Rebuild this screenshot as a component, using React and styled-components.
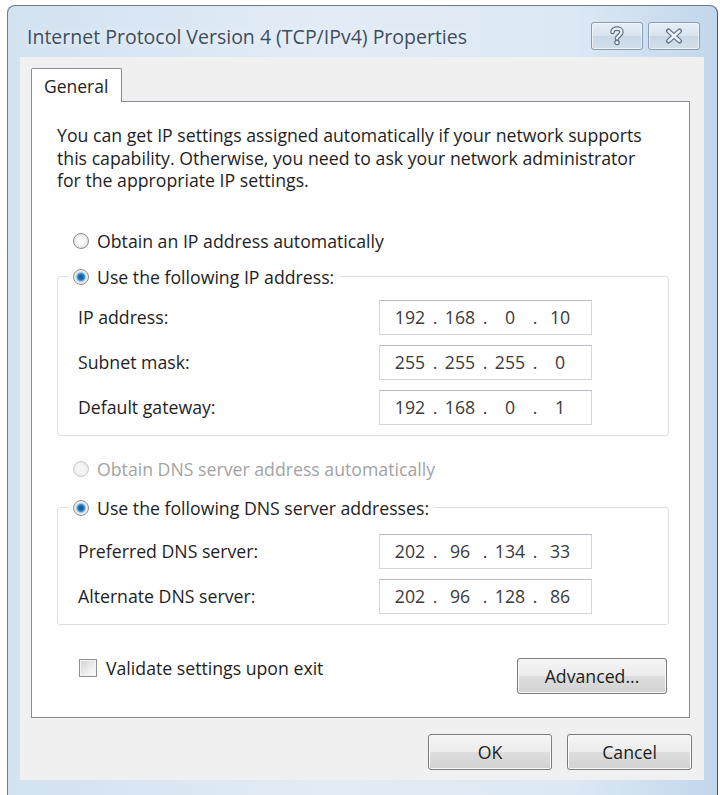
import React from "react";
import styled, { createGlobalStyle } from "styled-components";

const GlobalStyle = createGlobalStyle`
  body {
    margin: 0;
    background: #ffffff;
    font-family: "Open Sans", "Noto Sans", sans-serif;
    overflow: hidden;
  }
`;

const ipGroup = [
  { label: "IP address:", value: ["192", "168", "0", "10"] },
  { label: "Subnet mask:", value: ["255", "255", "255", "0"] },
  { label: "Default gateway:", value: ["192", "168", "0", "1"] },
];

const dnsGroup = [
  { label: "Preferred DNS server:", value: ["202", "96", "134", "33"] },
  { label: "Alternate DNS server:", value: ["202", "96", "128", "86"] },
];

const HelpGlyph = () => (
  <svg width="16" height="20" viewBox="0 0 16 20">
    <g fill="none" strokeLinecap="round" strokeLinejoin="round">
      <path d="M3.5 6 C3.5 1.5 12.5 1.5 12.5 6 C12.5 9.5 8 9.5 8 12.5" stroke="#617286" strokeWidth="4.6" />
      <path d="M3.5 6 C3.5 1.5 12.5 1.5 12.5 6 C12.5 9.5 8 9.5 8 12.5" stroke="#eef3f8" strokeWidth="2.2" />
      <circle cx="8" cy="16.5" r="2.2" fill="#eef3f8" stroke="#617286" strokeWidth="1.2" />
    </g>
  </svg>
);

const CloseGlyph = () => (
  <svg width="20" height="16" viewBox="0 0 20 16">
    <g fill="none" strokeLinecap="round">
      <path d="M4.5 3 L15.5 13 M15.5 3 L4.5 13" stroke="#617286" strokeWidth="5" />
      <path d="M4.5 3 L15.5 13 M15.5 3 L4.5 13" stroke="#eef3f8" strokeWidth="2.4" />
    </g>
  </svg>
);

const IpField = ({ value }) => (
  <Field>
    {value.map((v, i) => (
      <React.Fragment key={i}>
        {i > 0 && <Dot>.</Dot>}
        <Octet>{v}</Octet>
      </React.Fragment>
    ))}
  </Field>
);

const AddressRows = ({ rows }) =>
  rows.map((row) => (
    <Row key={row.label}>
      <Label>{row.label}</Label>
      <IpField value={row.value} />
    </Row>
  ));

const App = () => {
  return (
    <>
      <GlobalStyle />
      <Window>
        <TitleBar>
          <Caption>Internet Protocol Version 4 (TCP/IPv4) Properties</Caption>
          <CaptionButtons>
            <CaptionButton>
              <HelpGlyph />
            </CaptionButton>
            <CaptionButton>
              <CloseGlyph />
            </CaptionButton>
          </CaptionButtons>
        </TitleBar>
        <Client>
          <Tabs>
            <Tab>General</Tab>
          </Tabs>
          <Panel>
            <Intro>
              You can get IP settings assigned automatically if your network supports
              <br />
              this capability. Otherwise, you need to ask your network administrator
              <br />
              for the appropriate IP settings.
            </Intro>
            <RadioRow $top={37}>
              <Radio />
              Obtain an IP address automatically
            </RadioRow>
            <Group $top={12} $pad={2}>
              <Legend>
                <Radio $checked />
                Use the following IP address:
              </Legend>
              <AddressRows rows={ipGroup} />
            </Group>
            <RadioRow $top={21} $disabled>
              <Radio $disabled />
              Obtain DNS server address automatically
            </RadioRow>
            <Group $top={15} $pad={5}>
              <Legend>
                <Radio $checked />
                Use the following DNS server addresses:
              </Legend>
              <AddressRows rows={dnsGroup} />
            </Group>
            <Footer>
              <CheckRow>
                <CheckBox />
                Validate settings upon exit
              </CheckRow>
              <Button $width={150}>Advanced...</Button>
            </Footer>
          </Panel>
          <Actions>
            <Button $width={124}>OK</Button>
            <Button $width={125}>Cancel</Button>
          </Actions>
        </Client>
      </Window>
    </>
  );
};

const Window = styled.div`
  margin: 5px 0 0 7px;
  width: 711px;
  height: 800px;
  box-sizing: border-box;
  border: 1px solid #6d7a88;
  border-right-color: #3f5672;
  border-bottom: none;
  border-radius: 8px 8px 0 0;
  background: linear-gradient(90deg, #d3e2f1 0%, #e2ecf6 45%, #dce8f4 80%, #c2d7ec 100%);
  padding: 0 13px 0 12px;
  display: flex;
  flex-direction: column;
`;

const TitleBar = styled.div`
  height: 51px;
  box-sizing: border-box;
  padding: 9px 4px 0 7px;
  display: flex;
  align-items: center;
`;

const Caption = styled.div`
  font-size: 19.5px;
  color: #3f4d5c;
  text-shadow: 0 0 6px #eef4fa;
`;

const CaptionButtons = styled.div`
  margin-left: auto;
  display: flex;
  gap: 5px;
`;

const CaptionButton = styled.div`
  width: 52px;
  height: 28px;
  box-sizing: border-box;
  border: 1px solid #8a9cb1;
  border-radius: 3px;
  background: linear-gradient(#e6eef6 0%, #d8e3ee 50%, #c9d7e6 51%, #d3dfeb 100%);
  box-shadow: inset 0 0 0 1px rgba(255, 255, 255, 0.6);
  display: flex;
  align-items: center;
  justify-content: center;
`;

const Client = styled.div`
  height: 723px;
  box-sizing: border-box;
  background: #f0f0f0;
  padding: 11px 14px 0 11px;
  display: flex;
  flex-direction: column;
`;

const Tabs = styled.div`
  display: flex;
`;

const Tab = styled.div`
  position: relative;
  z-index: 1;
  width: 91px;
  height: 34px;
  box-sizing: border-box;
  margin-bottom: -1px;
  border: 1px solid #898c95;
  border-bottom: none;
  border-radius: 2px 2px 0 0;
  background: #ffffff;
  padding-left: 12px;
  display: flex;
  align-items: center;
  font-size: 17.5px;
  color: #1e1e1e;
`;

const Panel = styled.div`
  height: 617px;
  box-sizing: border-box;
  border: 1px solid #898c95;
  background: #ffffff;
  padding: 22px 20px 0 25px;
  color: #1e1e1e;
  font-size: 17.7px;
`;

const Intro = styled.p`
  margin: 0;
  line-height: 22.5px;
  white-space: nowrap;
`;

const RadioRow = styled.div`
  margin: ${(p) => p.$top}px 0 0 16px;
  height: 24px;
  display: flex;
  align-items: center;
  gap: 8px;
  color: ${(p) => (p.$disabled ? "#a3a3a3" : "#1e1e1e")};
`;

const Radio = styled.span`
  width: 16px;
  height: 16px;
  flex: none;
  box-sizing: border-box;
  border-radius: 50%;
  border: 1px solid ${(p) => (p.$disabled ? "#c8c8c8" : "#8e8f8f")};
  background: ${(p) =>
    p.$checked
      ? "radial-gradient(circle, #1c5f9c 0 2px, #3d8fd0 3.5px, #9fc9ea 4.5px, #e8e8e8 5.5px, #f8f8f8 100%)"
      : p.$disabled
      ? "radial-gradient(circle, #f4f4f4 0 40%, #e4e4e4 100%)"
      : "radial-gradient(circle, #fafafa 0 30%, #d4d4d4 100%)"};
`;

const Group = styled.fieldset`
  margin: ${(p) => p.$top}px 0 0;
  padding: ${(p) => p.$pad}px 0 10px 20px;
  border: 1px solid #dcdfe3;
  border-radius: 3px;
`;

const Legend = styled.legend`
  margin-left: -9px;
  padding: 0 5px 0 4px;
  height: 24px;
  display: flex;
  align-items: center;
  gap: 8px;
`;

const Row = styled.div`
  display: flex;
  align-items: center;
  margin-top: 10px;
  &:first-of-type {
    margin-top: 9px;
  }
`;

const Label = styled.div`
  width: 301px;
`;

const Field = styled.div`
  width: 213px;
  height: 35px;
  box-sizing: border-box;
  border: 1px solid #d3d6db;
  border-top-color: #b9bcc2;
  padding-left: 9px;
  display: flex;
  align-items: center;
  color: #3a3a3a;
`;

const Octet = styled.span`
  width: 42px;
  text-align: center;
`;

const Dot = styled.span`
  width: 8px;
  text-align: center;
`;

const Footer = styled.div`
  margin-top: 33px;
  padding-right: 2px;
  display: flex;
  justify-content: space-between;
  align-items: flex-start;
`;

const CheckRow = styled.div`
  margin-left: 22px;
  display: flex;
  align-items: center;
  gap: 9px;
  height: 20px;
`;

const CheckBox = styled.span`
  width: 18px;
  height: 18px;
  box-sizing: border-box;
  border: 1px solid #8e8f8f;
  background: linear-gradient(135deg, #d2d2d2 0%, #f2f2f2 70%, #fbfbfb 100%);
  box-shadow: inset 0 0 0 1px #f4f4f4;
`;

const Button = styled.div`
  width: ${(p) => p.$width}px;
  height: 36px;
  box-sizing: border-box;
  border: 1px solid #7a7a7a;
  border-radius: 3px;
  background: linear-gradient(#f4f4f4 0%, #ececec 50%, #dedede 51%, #d2d2d2 100%);
  box-shadow: inset 0 0 0 1px #fbfbfb;
  display: flex;
  align-items: center;
  justify-content: center;
  font-size: 17.7px;
  color: #1e1e1e;
`;

const Actions = styled.div`
  margin: 16px -2px 0 0;
  display: flex;
  justify-content: flex-end;
  gap: 15px;
`;

export default App;
